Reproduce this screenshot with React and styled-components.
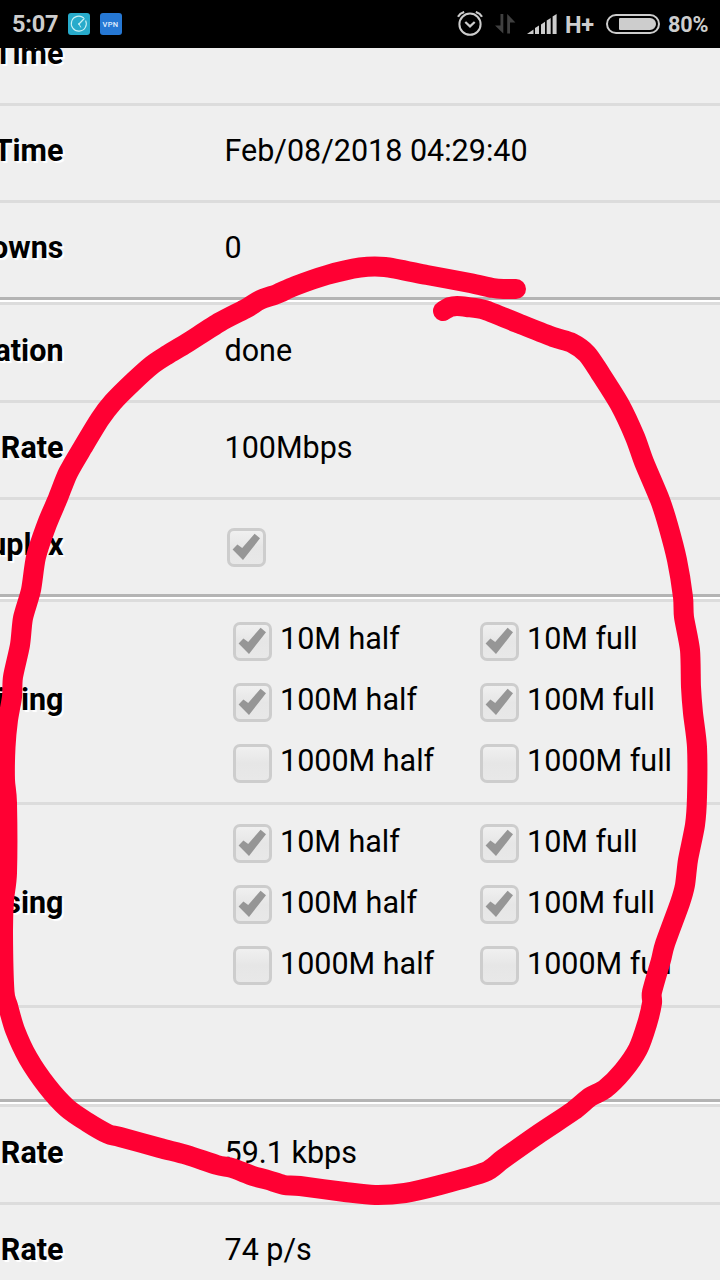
import styled, { createGlobalStyle } from "styled-components";

const rows = [
  { label: "Time" },
  { label: "Time", value: "Feb/08/2018 04:29:40" },
  { label: "Downs", value: "0" },
  { sep: true },
  { label: "Negotiation", value: "done" },
  { label: "Rate", value: "100Mbps" },
  { label: "Duplex", checkbox: true },
  { sep: true },
  { label: "Advertising", rates: true },
  { label: "Advertising", rates: true },
  { height: 94.5 },
  { sep: true },
  { label: "Rate", value: "59.1 kbps" },
  { label: "Rate", value: "74 p/s" },
];

const rates = [
  { name: "10M half", on: true },
  { name: "10M full", on: true },
  { name: "100M half", on: true },
  { name: "100M full", on: true },
  { name: "1000M half", on: false },
  { name: "1000M full", on: false },
];

const strokePoints = [
  [516, 289], [504, 289], [493, 288], [470, 283], [427, 275], [385, 267], [360, 267.5],
  [327, 275], [295, 286], [277, 294], [260, 300], [247, 308], [220, 322], [187, 343],
  [167, 355], [152, 365], [133, 382], [113, 402], [100, 419], [83, 447], [68, 473],
  [58, 498], [47, 524], [36, 557], [31, 590], [23, 618], [20, 645], [13, 677],
  [12, 697], [8, 720], [5.5, 747], [5, 780], [7, 803], [7, 873], [4, 900],
  [3, 933], [4.5, 992], [8, 1006], [15, 1030], [28, 1058], [47, 1086], [67, 1108],
  [87, 1122], [108, 1134], [120, 1137], [160, 1148], [187, 1155], [217, 1165], [232, 1168],
  [253, 1176], [268, 1180], [284, 1185], [300, 1186], [345, 1192], [375, 1195], [405, 1193], [440, 1185],
  [485, 1172], [503, 1159], [540, 1133], [573, 1111], [590, 1097], [605, 1089], [623, 1071],
  [638, 1049], [647, 1024], [652, 1003], [652, 992], [661, 960], [665, 944], [680, 903],
  [685, 885], [688, 860], [695, 825], [697, 797], [697, 747], [693, 713], [691, 687],
  [690, 650], [684, 617], [683, 597], [677, 560], [668, 525], [660, 500], [644, 462],
  [635, 437], [620, 405], [600, 373], [587, 354], [572, 343], [553, 337], [520, 324],
  [485, 310], [467, 307], [457, 306], [450, 307], [443, 311],
];

// curve that goes through every touch point
function smooth(points) {
  let d = `M${points[0][0]} ${points[0][1]}`;
  for (let i = 0; i < points.length - 1; i++) {
    const before = points[i - 1] || points[i];
    const from = points[i];
    const to = points[i + 1];
    const after = points[i + 2] || to;
    const c1 = [from[0] + (to[0] - before[0]) / 8, from[1] + (to[1] - before[1]) / 8];
    const c2 = [to[0] - (after[0] - from[0]) / 8, to[1] - (after[1] - from[1]) / 8];
    d += ` C${c1[0]} ${c1[1]} ${c2[0]} ${c2[1]} ${to[0]} ${to[1]}`;
  }
  return d;
}

function Checkbox({ checked }) {
  return (
    <Box>
      {checked && (
        <svg width="33" height="33" viewBox="0 0 33 33">
          <path d="M2.6 18.4 L7.4 13.4 L12.2 17 L24.6 2.8 L30 7.3 L13 29 Z" fill="#969696" />
        </svg>
      )}
    </Box>
  );
}

function StatusBar() {
  return (
    <Bar>
      <Clock>5:07</Clock>
      <AppIcon $color="#27abcb">
        <svg width="22" height="22" viewBox="0 0 22 22" fill="none" stroke="#c9f0f4">
          <path d="M15.8 5 A7.5 7.5 0 1 0 17.6 7.4" strokeWidth="1.1" />
          <path d="M11 11 L16.4 5.4" strokeWidth="1.3" />
          <path d="M11 11 L12.8 14.4" strokeWidth="1" />
          <circle cx="11" cy="11" r="1" fill="#c9f0f4" stroke="none" />
        </svg>
      </AppIcon>
      <AppIcon $color="#2678d4">VPN</AppIcon>
      <Status>
        <svg width="26" height="26" viewBox="0 0 26 26" fill="none" stroke="#cdcdcd">
          <circle cx="13" cy="13.2" r="10.6" strokeWidth="2" />
          <path d="M8.3 11 L13 15.4 L17.7 11" strokeWidth="2.2" />
          <path d="M1 5.8 Q3 2.2 7.2 1 M25 5.8 Q23 2.2 18.8 1" strokeWidth="2.2" />
        </svg>
        <svg width="21" height="20" viewBox="0 0 21 20" fill="#404040">
          <path d="M5.5 0 H8.3 V19.5 L0 11.4 H5.5 Z" />
          <path d="M12.2 0 L20.4 8.4 H15 V19.5 H12.2 Z" />
        </svg>
        <svg width="30" height="20" viewBox="0 0 30 20" fill="#cdcdcd">
          <path d="M0 20 L6.5 15.5 V20 Z" />
          <path d="M8 14 L12 11.5 V20 H8 Z" />
          <path d="M14 10.4 L18 7.8 V20 H14 Z" />
          <path d="M19.7 6.5 L23.7 4 V20 H19.7 Z" />
          <path d="M25.6 2.4 L29.6 0 V20 H25.6 Z" />
        </svg>
        <Network>H+</Network>
        <Battery>
          <Charge />
        </Battery>
        <Percent>80%</Percent>
      </Status>
    </Bar>
  );
}

export default function App() {
  return (
    <>
      <GlobalStyle />
      <Screen>
        <StatusBar />
        <Page>
          <Table>
            {rows.map((row, i) =>
              row.sep ? (
                <Separator key={i} />
              ) : (
                <Row key={i} $height={row.rates ? 202.6 : row.height}>
                  <Label>{row.label}</Label>
                  {row.value && <Value>{row.value}</Value>}
                  {row.checkbox && (
                    <Single>
                      <Checkbox checked />
                    </Single>
                  )}
                  {row.rates && (
                    <Rates>
                      {rates.map((rate) => (
                        <Option key={rate.name}>
                          <Checkbox checked={rate.on} />
                          <OptionText>{rate.name}</OptionText>
                        </Option>
                      ))}
                    </Rates>
                  )}
                </Row>
              )
            )}
          </Table>
        </Page>
        <Drawing width="720" height="1280" viewBox="0 0 720 1280">
          <path d={smooth(strokePoints)} />
        </Drawing>
      </Screen>
    </>
  );
}

const GlobalStyle = createGlobalStyle`
  body {
    margin: 0;
    background: #efefef;
    font-family: Roboto, "Liberation Sans", sans-serif;
  }
`;

const Screen = styled.div`
  position: relative;
  display: flex;
  flex-direction: column;
  width: 720px;
  height: 1280px;
  overflow: hidden;
`;

const Bar = styled.header`
  display: flex;
  align-items: center;
  box-sizing: border-box;
  height: 48px;
  flex-shrink: 0;
  padding: 0 12px;
  background: #000;
  color: #cdcdcd;
`;

const Clock = styled.span`
  width: 55.5px;
  font-size: 23.5px;
  font-weight: 700;
  letter-spacing: -0.2px;
`;

const AppIcon = styled.span`
  display: flex;
  align-items: center;
  justify-content: center;
  width: 22px;
  height: 22px;
  margin-right: 10px;
  border-radius: 3px;
  background: ${(props) => props.$color};
  color: #e4f0ff;
  font-size: 7.5px;
  font-weight: 500;
  letter-spacing: 0.3px;
`;

const Status = styled.div`
  display: flex;
  align-items: center;
  margin-left: auto;

  svg:nth-child(2) {
    margin: 0 11px 0 12px;
  }
`;

const Network = styled.span`
  margin-left: 8px;
  width: 33px;
  padding-top: 1px;
  font-size: 23.5px;
  font-weight: 700;
  letter-spacing: -0.3px;
`;

const Battery = styled.span`
  box-sizing: border-box;
  width: 54px;
  height: 20px;
  margin: 0 8px;
  padding: 2px 2px 2px 11px;
  border: 2px solid #cdcdcd;
  border-radius: 10px;
`;

const Charge = styled.span`
  display: block;
  height: 12px;
  border-radius: 1px 6px 6px 1px;
  background: #cdcdcd;
`;

const Percent = styled.span`
  margin-right: -0.5px;
  padding-top: 1px;
  font-size: 21.6px;
  font-weight: 700;
  letter-spacing: -0.1px;
`;

const Page = styled.main`
  flex: 1;
  min-height: 0;
  overflow: hidden;
  background: #efefef;
  color: #000;
  font-size: 30.5px;
`;

const Table = styled.div`
  display: flex;
  flex-direction: column;
  margin-top: -42.9px;
`;

const Row = styled.div`
  display: flex;
  align-items: center;
  flex-shrink: 0;
  box-sizing: border-box;
  height: ${(props) => props.$height || 97.4}px;
  border-top: 3px solid #dcdcdc;
`;

const Separator = styled.div`
  box-sizing: border-box;
  height: 5px;
  flex-shrink: 0;
  border-top: 3px solid #b4b4b4;
  background: #fff;
`;

const Label = styled.div`
  display: flex;
  justify-content: flex-end;
  width: 63.5px;
  margin-right: 161px;
  padding-bottom: 4.6px;
  font-weight: 700;
  white-space: nowrap;
  text-shadow: 2px 2px 1px #fff;
`;

const Value = styled.div`
  padding-bottom: 4.6px;
  white-space: nowrap;
`;

const Single = styled.div`
  padding-left: 2.5px;
`;

const Rates = styled.div`
  display: grid;
  grid-template-columns: 247px 240px;
  grid-auto-rows: 61px;
  padding-left: 8px;
`;

const Option = styled.label`
  display: flex;
  align-items: center;
  white-space: nowrap;
`;

const OptionText = styled.span`
  padding: 0 0 4.6px 8.5px;
`;

const Box = styled.span`
  display: flex;
  box-sizing: border-box;
  width: 39px;
  height: 39px;
  border: 3px solid #cdcdcd;
  border-radius: 7px;
  background: linear-gradient(#f0f0f0, #e6e6e6 50%, #e8e8e8);
`;

const Drawing = styled.svg`
  position: absolute;
  top: 0;
  left: 0;
  fill: none;
  stroke: #ff0033;
  stroke-width: 20px;
  stroke-linecap: round;
  stroke-linejoin: round;
`;
